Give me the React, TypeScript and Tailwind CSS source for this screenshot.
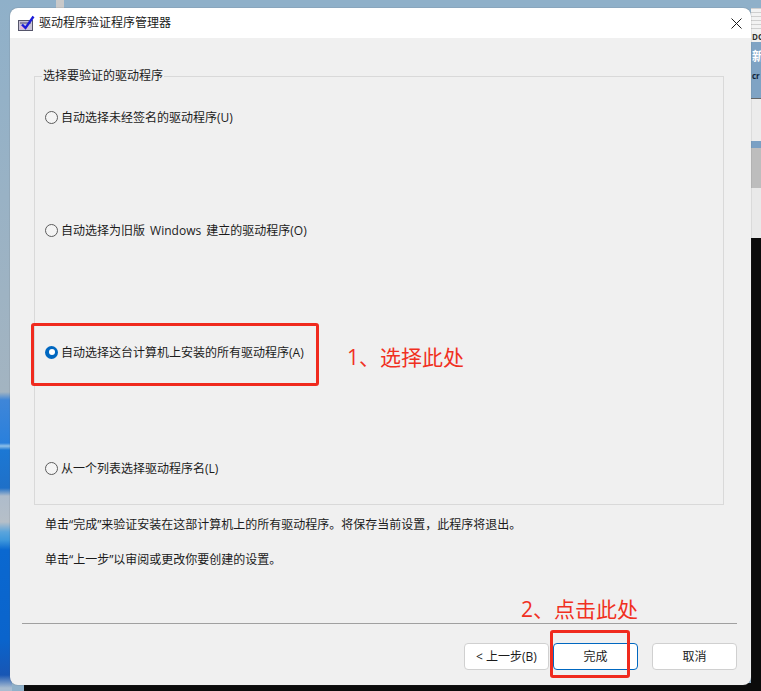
const radioOptions = [
    { label: '自动选择未经签名的驱动程序(U)', checked: false, margin: 'mt-0' },
    { label: '自动选择为旧版 Windows 建立的驱动程序(O)', checked: false, margin: 'mt-[93px]' },
    { label: '自动选择这台计算机上安装的所有驱动程序(A)', checked: true, margin: 'mt-[102px]' },
    { label: '从一个列表选择驱动程序名(L)', checked: false, margin: 'mt-[96px]' },
];

function VerifierIcon() {
    return (
        <svg width="17" height="17" viewBox="0 0 17 17" className="shrink-0">
            <rect x="0.5" y="5.5" width="14" height="10" fill="#c9c3d8" stroke="#55556a" />
            <rect x="2" y="7" width="11" height="2" fill="#8a86a8" />
            <rect x="2" y="11" width="8" height="3" fill="#e6b8d8" />
            <path d="M4 9.5 L7.5 13 L15.5 1.5" fill="none" stroke="#1c1cd8" strokeWidth="2.4" />
        </svg>
    );
}

function Radio({ checked }: { checked: boolean }) {
    if (checked) {
        return (
            <span className="flex h-[13px] w-[13px] shrink-0 items-center justify-center rounded-full bg-[#0067c0]">
                <span className="h-[6px] w-[6px] rounded-full bg-white" />
            </span>
        );
    }
    return <span className="h-[13px] w-[13px] shrink-0 rounded-full border border-[#5c5c5c] bg-[#f4f4f4]" />;
}

function DialogButton({ label, primary }: { label: string; primary?: boolean }) {
    return (
        <button
            className={
                'flex h-[27px] w-[85px] items-center justify-center rounded-[4px] border bg-white pt-px text-[12px] text-[#1b1b1b] ' +
                (primary ? 'border-[#0067c0]' : 'border-[#d0d0d0]')
            }
        >
            {label}
        </button>
    );
}

export default function App() {
    return (
        <div className="relative flex h-[691px] w-[761px] flex-col overflow-hidden bg-[#8fb0c9] font-['Open_Sans','Noto_Sans_CJK_SC',sans-serif] text-[#1b1b1b]">
            {/* desktop behind the dialog */}
            <div className="absolute left-0 top-0 h-[691px] w-[12px] bg-[linear-gradient(180deg,#8fb0c9_0px,#a3b4c1_392px,#3f86d8_400px,#2a80dc_443px,#8fc0e8_446px,#1c78d4_450px,#1f70c8_488px,#aebccb_496px,#b6bfc8_522px,#5aa4dc_532px,#3f98dc_540px,#0a68d0_550px,#0a64cc_640px,#1856b4_675px,#a8bcd0_688px)]" />
            <div className="absolute bottom-0 left-[24px] h-[8px] w-[737px] bg-[#0b0b0b]" />
            <div className="absolute right-0 top-0 flex h-[691px] w-[10px] flex-col overflow-hidden bg-[#0b0b0b] text-[8px] font-bold leading-none">
                <div className="h-[8px] shrink-0 bg-[#8fb0c9]" />
                <div className="h-[24px] shrink-0 bg-[repeating-linear-gradient(180deg,#cfcfcf_0px,#cfcfcf_1px,#f2f2f2_1px,#f2f2f2_4px)]" />
                <div className="h-[10px] shrink-0 whitespace-nowrap bg-[#efefef] pl-px pt-px text-[#333]">DC</div>
                <div className="h-[56px] shrink-0 overflow-hidden whitespace-nowrap bg-[#7fa3c4] pl-px pt-[8px] text-white">
                    <span className="block h-[13px] text-[12px] leading-[13px]">新</span>
                    <span className="mt-[10px] block h-[6px] leading-[6px] text-[#10243a]">cr</span>
                </div>
                <div className="h-[43px] shrink-0 border-t border-[#666] bg-[#ececec]" />
                <div className="h-[7px] shrink-0 bg-[#7aa0c4]" />
                <div className="h-[40px] shrink-0 bg-[#bdbdbd]" />
                <div className="h-[50px] shrink-0 bg-[#e9e9e9]" />
            </div>
            <div className="absolute left-[56px] top-0 h-[8px] w-[8px] bg-[#c9c9c9]" />

            <div className="relative ml-[10px] mt-[8px] flex h-[677px] w-[741px] flex-col overflow-hidden rounded-[8px] shadow-[0_0_1px_#555]">
                <div className="flex h-[30px] items-center bg-white pl-[8px] pr-[9px] text-[12px]">
                    <VerifierIcon />
                    <span className="ml-[4px]">驱动程序验证程序管理器</span>
                    <svg width="11" height="11" viewBox="0 0 11 11" className="ml-auto">
                        <path d="M0.5 0.5 L10.5 10.5 M10.5 0.5 L0.5 10.5" stroke="#1b1b1b" strokeWidth="1" fill="none" />
                    </svg>
                </div>

                <div className="flex flex-1 flex-col bg-[#f0f0f0] text-[12px]">
                    <div className="relative ml-[24px] mt-[38px] h-[429px] w-[690px] border border-[#d9d9d9] pl-[10px] pt-[30px]">
                        <span className="absolute left-[7px] top-[-9px] bg-[#f0f0f0] px-[1px] leading-[16px]">
                            选择要验证的驱动程序
                        </span>
                        {radioOptions.map((opt) => (
                            <div key={opt.label} className={'flex h-[20px] items-center gap-[3px] ' + opt.margin}>
                                <Radio checked={opt.checked} />
                                <span className="pt-[2px] [word-spacing:2px]">{opt.label}</span>
                            </div>
                        ))}
                    </div>

                    <p className="ml-[35px] mt-[11px] h-[18px] leading-[18px]">
                        单击“完成”来验证安装在这部计算机上的所有驱动程序。将保存当前设置，此程序将退出。
                    </p>
                    <p className="ml-[35px] mt-[17px] h-[18px] leading-[18px]">
                        单击“上一步”以审阅或更改你要创建的设置。
                    </p>

                    <div className="ml-[12px] mt-[54px] h-px w-[715px] bg-[#a0a0a0]" />

                    <div className="ml-[454px] mt-[19px] flex">
                        <DialogButton label="< 上一步(B)" />
                        <div className="ml-[4px]">
                            <DialogButton label="完成" primary />
                        </div>
                        <div className="ml-[14px]">
                            <DialogButton label="取消" />
                        </div>
                    </div>
                </div>
            </div>

            {/* red annotations drawn over the screenshot */}
            <div className="absolute left-[31px] top-[323px] h-[63px] w-[288px] rounded-[3px] border-[3px] border-[#f02a1e]" />
            <span className="absolute left-[347px] top-[343px] text-[21px] leading-[28px] text-[#f0301f]">1、选择此处</span>
            <div className="absolute left-[550px] top-[630px] h-[48px] w-[80px] rounded-[3px] border-[3px] border-[#f02a1e]" />
            <span className="absolute left-[521px] top-[595px] text-[21px] leading-[28px] text-[#f0301f]">2、点击此处</span>
        </div>
    );
}
